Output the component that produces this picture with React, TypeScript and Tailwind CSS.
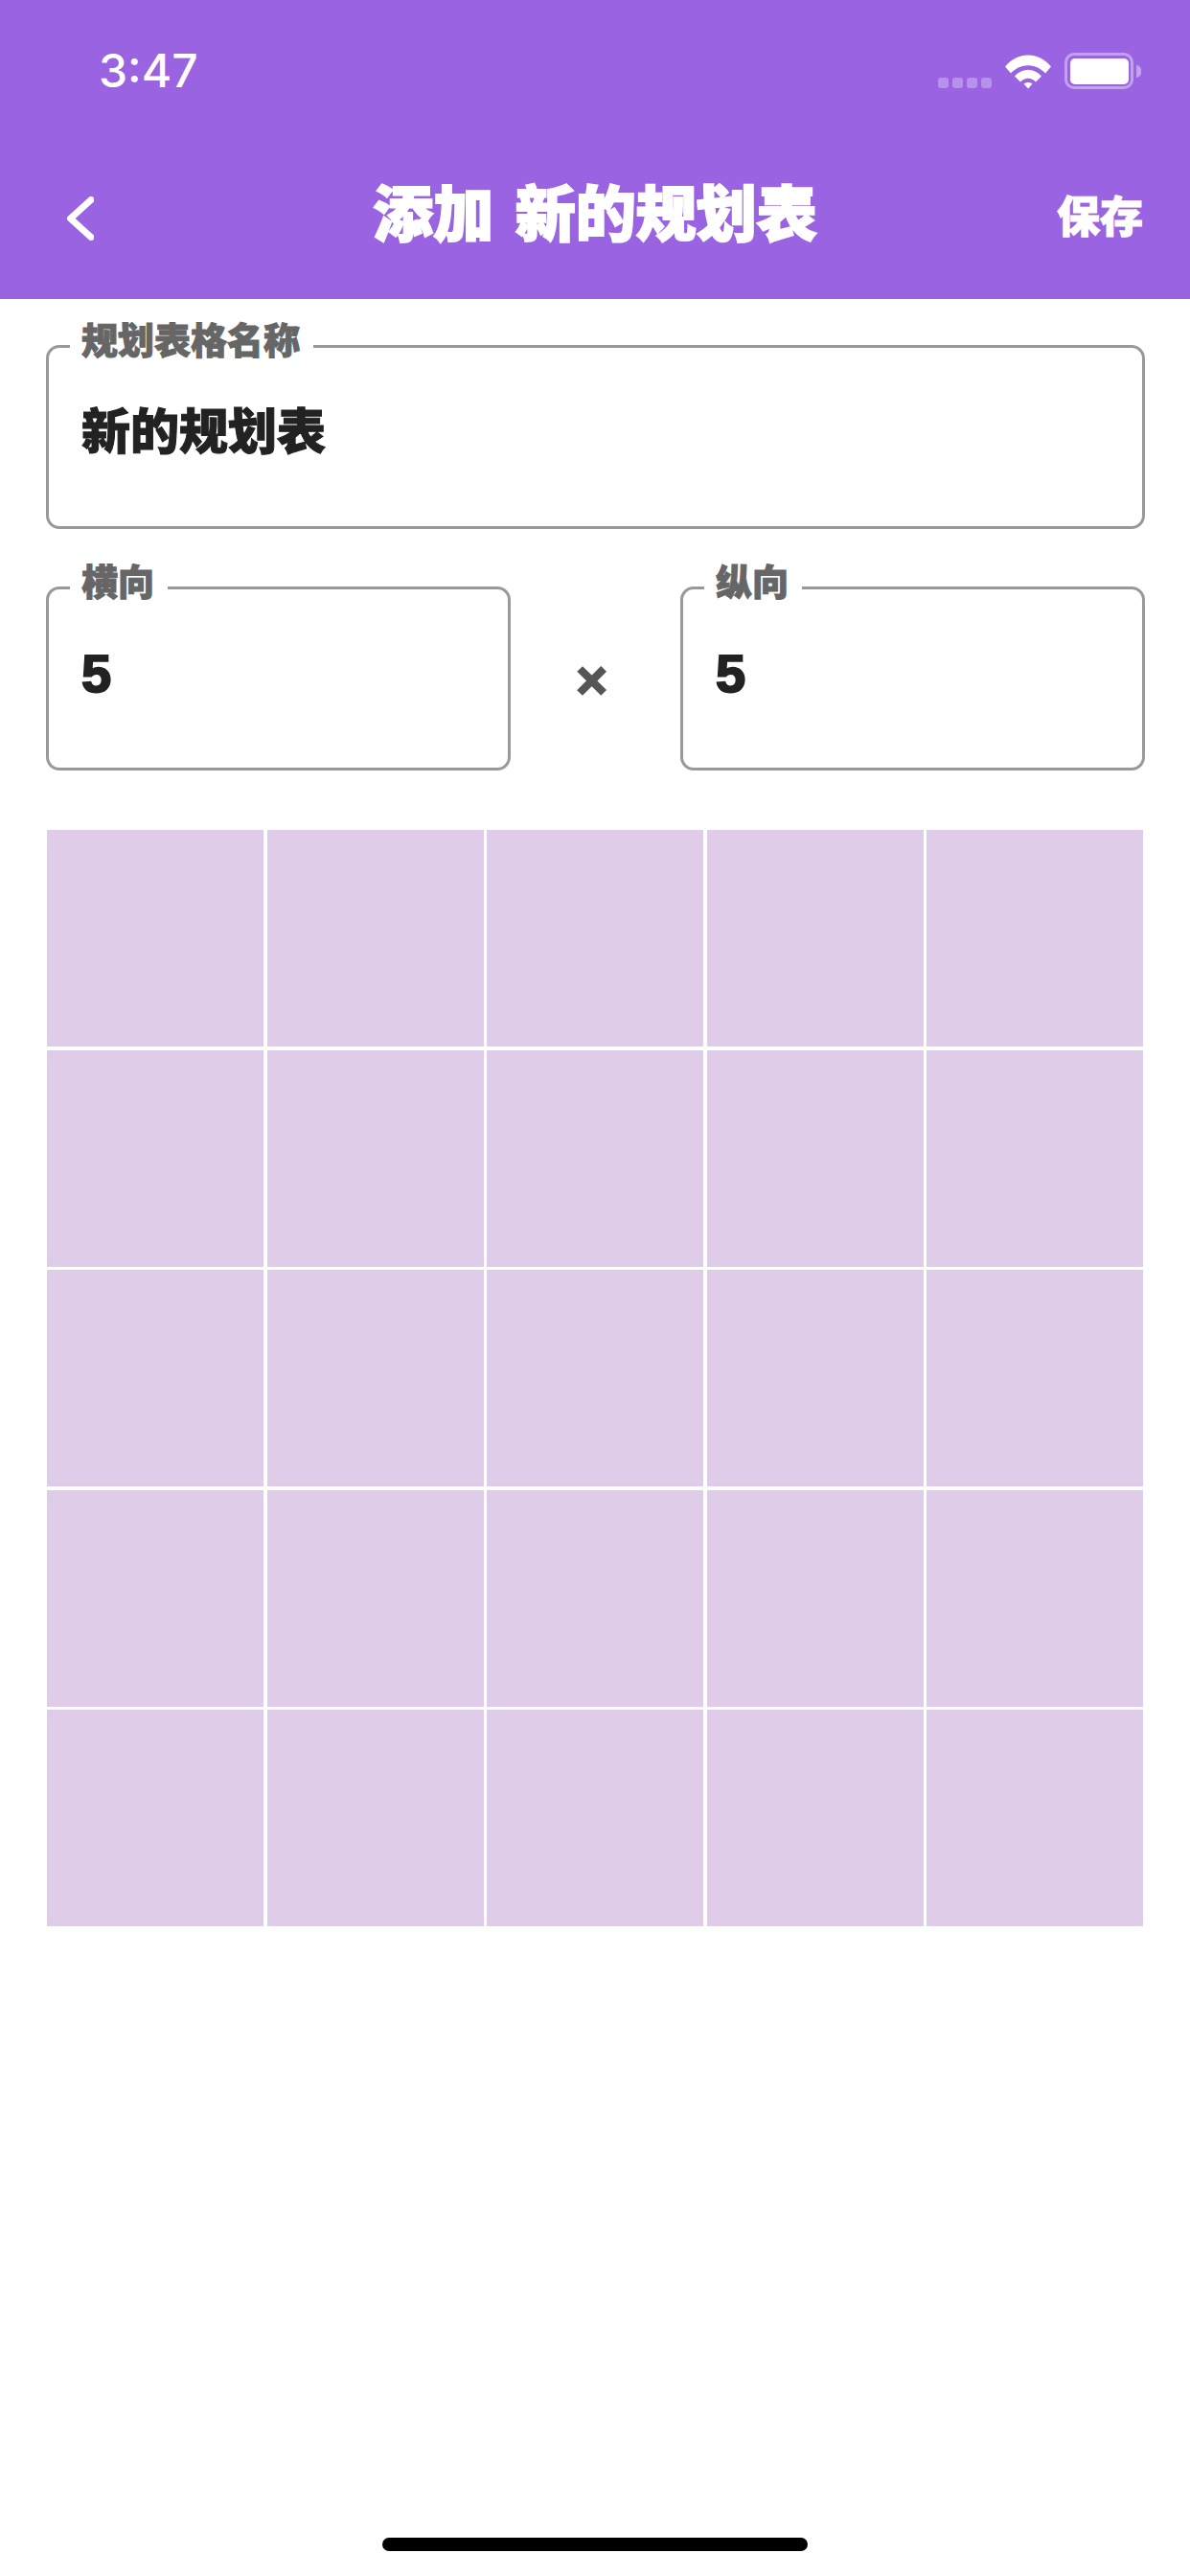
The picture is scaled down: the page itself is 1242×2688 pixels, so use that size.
const cells = Array.from({ length: 25 }, (_, i) => i);

const StatusBar = () => (
  <div className="relative h-[132px] w-full">
    <span className="absolute left-[103px] top-[46px] font-['Inter',sans-serif] text-[48px] leading-[56px] font-medium text-white">3:47</span>
    <div className="absolute right-[51px] top-[55px] flex items-end">
      <div className="mb-[1px] mr-[14px] flex gap-[4px]">
        <div className="h-[11px] w-[11px] rounded-[3px] bg-white/30" />
        <div className="h-[11px] w-[11px] rounded-[3px] bg-white/30" />
        <div className="h-[11px] w-[11px] rounded-[3px] bg-white/30" />
        <div className="h-[11px] w-[11px] rounded-[3px] bg-white/30" />
      </div>
      <svg width="48" height="37" viewBox="0 0 48 36" className="mr-[14px]">
        <path d="M0 13 C13 -3 35 -3 48 13 L42 20 C32 9 16 9 6 20 Z" fill="#fff" />
        <path d="M10 23 C18 14 30 14 38 23 L32 29 C27 24 21 24 16 29 Z" fill="#fff" />
        <path d="M19.5 31 C22 29 26 29 28.5 31 L24 36 Z" fill="#fff" />
      </svg>
      <div className="flex items-center">
        <div className="flex h-[38px] w-[72px] items-center justify-center rounded-[10px] border-[3px] border-white/40">
          <div className="h-[27px] w-[61px] rounded-[5px] bg-white" />
        </div>
        <div className="ml-[3px] h-[13px] w-[5px] rounded-r-full bg-white/40" />
      </div>
    </div>
  </div>
);

const Field = ({ label, value, big }: { label: string; value: string; big?: boolean }) => (
  <div className="relative h-[192px] w-full rounded-[14px] border-[3px] border-[#999999] bg-white pl-[34px]">
    <span className="absolute left-[22px] top-[-32px] bg-gradient-to-b from-transparent from-[30%] to-white to-[30%] pl-[12px] pr-[14px] font-['Noto_Sans_CJK_SC',sans-serif] text-[38px] leading-[44px] font-black text-[#666666] [-webkit-text-stroke:1px_#666666]">
      {label}
    </span>
    <p className={`font-['Liberation_Sans','Noto_Sans_CJK_SC',sans-serif] font-black text-[#222222] ${big ? 'pt-[59px] text-[51px] leading-[60px] [-webkit-text-stroke:1px_#222222]' : 'pt-[56px] text-[56px] leading-[64px] [-webkit-text-stroke:2px_#222222]'}`}>
      {value}
    </p>
  </div>
);

const App = () => {
  return (
    <div className="flex h-[2688px] w-[1242px] flex-col overflow-hidden bg-white">
      <div className="h-[312px] bg-[#9963e1]">
        <StatusBar />
        <div className="relative flex h-[180px] items-center justify-between pl-[70px] pr-[49px]">
          <svg width="28" height="46" viewBox="0 0 28 46" fill="none" className="mt-[12px]">
            <path d="M25 3.5 L3.5 23 L25 42.5" stroke="#ffffff" strokeWidth="7" strokeLinecap="round" strokeLinejoin="round" />
          </svg>
          <h1 className="absolute left-0 right-0 top-[49px] text-center font-['Noto_Sans_CJK_SC',sans-serif] text-[63px] leading-[76px] font-black text-white [word-spacing:8px] [-webkit-text-stroke:2px_#ffffff]">
            添加 新的规划表
          </h1>
          <span className="pt-[4px] font-['Noto_Sans_CJK_SC',sans-serif] text-[45px] leading-[54px] font-black text-white [-webkit-text-stroke:1px_#ffffff]">
            保存
          </span>
        </div>
      </div>

      <div className="flex flex-col pl-[48px] pr-[47px] pt-[48px]">
        <Field label="规划表格名称" value="新的规划表" big />
        <div className="mt-[60px] flex items-center">
          <div className="w-[485px]">
            <Field label="横向" value="5" />
          </div>
          <span className="flex-1 pb-[2px] pr-[8px] pt-[6px] text-center font-['Liberation_Sans',sans-serif] text-[56px] leading-[60px] font-black text-[#555555] [-webkit-text-stroke:2px_#555555]">×</span>
          <div className="w-[485px]">
            <Field label="纵向" value="5" />
          </div>
        </div>
        <div className="ml-[1px] mt-[62px] grid w-[1144px] grid-cols-5 gap-[3.5px]">
          {cells.map((c) => (
            <div key={c} className="h-[226px] bg-[#dfcce9]" />
          ))}
        </div>
      </div>

      <div className="mt-auto mb-[26px] flex justify-center">
        <div className="h-[14px] w-[444px] rounded-full bg-black" />
      </div>
    </div>
  );
};

export default App;
